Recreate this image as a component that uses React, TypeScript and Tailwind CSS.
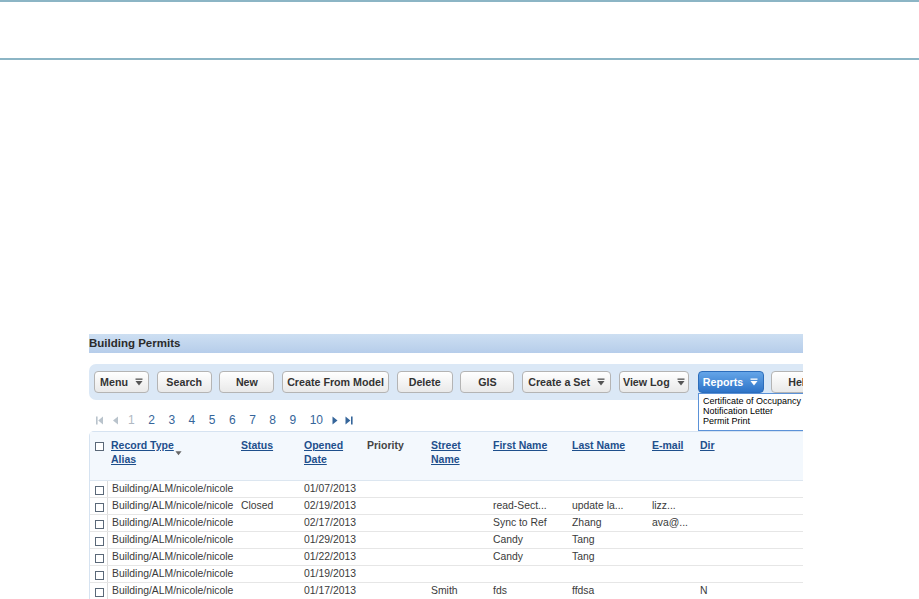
import React from 'react';

const font = { fontFamily: '"Liberation Sans", Arial, sans-serif' };

const DropIcon: React.FC<{ light?: boolean }> = ({ light }) => (
  <svg width="8" height="8" viewBox="0 0 8 8" className="ml-[7px]">
    <rect x="0.5" y="0.5" width="7" height="1.3" fill={light ? '#ffffff' : '#555555'} />
    <path d="M0.5 3 H7.5 L4 7.5 Z" fill={light ? '#ffffff' : '#555555'} />
  </svg>
);

interface Btn {
  label: string;
  width: number;
  drop?: boolean;
}

const buttons: Btn[] = [
  { label: 'Menu', width: 55, drop: true },
  { label: 'Search', width: 55 },
  { label: 'New', width: 55 },
  { label: 'Create From Model', width: 107 },
  { label: 'Delete', width: 56 },
  { label: 'GIS', width: 54 },
  { label: 'Create a Set', width: 89, drop: true },
  { label: 'View Log', width: 70, drop: true },
];

const columns = [
  { w: 130, label: ['Record Type', 'Alias'], link: true, sort: true },
  { w: 63, label: ['Status'], link: true },
  { w: 63, label: ['Opened', 'Date'], link: true },
  { w: 64, label: ['Priority'], link: false },
  { w: 62, label: ['Street', 'Name'], link: true },
  { w: 79, label: ['First Name'], link: true },
  { w: 80, label: ['Last Name'], link: true },
  { w: 48, label: ['E-mail'], link: true },
  { w: 120, label: ['Dir'], link: true },
];

const rows = [
  ['Building/ALM/nicole/nicole', '', '01/07/2013', '', '', '', '', '', ''],
  ['Building/ALM/nicole/nicole', 'Closed', '02/19/2013', '', '', 'read-Sect...', 'update la...', 'lizz...', ''],
  ['Building/ALM/nicole/nicole', '', '02/17/2013', '', '', 'Sync to Ref', 'Zhang', 'ava@...', ''],
  ['Building/ALM/nicole/nicole', '', '01/29/2013', '', '', 'Candy', 'Tang', '', ''],
  ['Building/ALM/nicole/nicole', '', '01/22/2013', '', '', 'Candy', 'Tang', '', ''],
  ['Building/ALM/nicole/nicole', '', '01/19/2013', '', '', '', '', '', ''],
  ['Building/ALM/nicole/nicole', '', '01/17/2013', '', 'Smith', 'fds', 'ffdsa', '', 'N'],
];

const Check: React.FC = () => (
  <span className="block w-[9px] h-[9px] border border-[#5a6878] bg-white" />
);

const Tri: React.FC<{ dir: 'l' | 'r'; bar?: boolean; color: string }> = ({ dir, bar, color }) => (
  <svg width="8" height="9" viewBox="0 0 8 9">
    {dir === 'l' ? (
      <>
        {bar && <rect x="0" y="0.5" width="1.6" height="8" fill={color} />}
        <path d={bar ? 'M7 0.5 V8.5 L2.2 4.5 Z' : 'M6 0.5 V8.5 L1 4.5 Z'} fill={color} />
      </>
    ) : (
      <>
        <path d={bar ? 'M0.5 0.5 V8.5 L5.4 4.5 Z' : 'M1.5 0.5 V8.5 L6.5 4.5 Z'} fill={color} />
        {bar && <rect x="6" y="0.5" width="1.6" height="8" fill={color} />}
      </>
    )}
  </svg>
);

const App: React.FC = () => {
  return (
    <div className="w-[919px] h-[599px] bg-white overflow-hidden text-[#333]" style={font}>
      <div className="h-[60px] border-t-2 border-b-2 border-[#8cb5c5]" />

      <div className="mt-[274px] ml-[89px] w-[714px] overflow-hidden relative">
        <div className="h-[19px] bg-gradient-to-b from-[#cddff2] to-[#b6cdea] flex items-center text-[11.5px] font-bold text-[#2b2b2b]">
          Building Permits
        </div>

        <div className="mt-[11px] h-[36px] bg-[#dbe8f6] rounded-l-[7px] flex items-center pl-[5px] gap-[7.7px] whitespace-nowrap">
          {buttons.map((b) => (
            <div
              key={b.label}
              style={{ width: b.width }}
              className="shrink-0 h-[22px] rounded-[4px] border border-[#b4b4b4] bg-gradient-to-b from-white to-[#e9e9e9] flex items-center justify-center text-[10.7px] font-bold text-[#333]"
            >
              {b.label}
              {b.drop && <DropIcon />}
            </div>
          ))}
          <div className="shrink-0 w-[66px] h-[22px] ml-[1px] rounded-[4px] border border-[#2c6dbb] bg-gradient-to-b from-[#64a5e8] to-[#2e74c8] flex items-center justify-center text-[10.7px] font-bold text-white">
            Reports
            <DropIcon light />
          </div>
          <div className="shrink-0 w-[60px] h-[22px] rounded-[4px] border border-[#b4b4b4] bg-gradient-to-b from-white to-[#e9e9e9] flex items-center pl-[16px] text-[10.7px] font-bold text-[#333]">
            Help
          </div>
        </div>

        <div className="absolute left-[609px] top-[59px] w-[110px] h-[38px] bg-white border border-[#5b92d8] pl-[4px] pt-[2px] text-[9px] leading-[10px] text-[#000] whitespace-nowrap">
          <div>Certificate of Occupancy</div>
          <div>Notification Letter</div>
          <div>Permit Print</div>
        </div>

        <div className="h-[31px] flex items-center pt-[9px] pl-[7px] text-[12px] text-[#35659a]">
          <Tri dir="l" bar color="#b9c3cc" />
          <span className="ml-[8px]"><Tri dir="l" color="#b9c3cc" /></span>
          <span className="ml-[8px] text-[#b0b8c2]">1</span>
          {['2', '3', '4', '5', '6', '7', '8', '9', '10'].map((n) => (
            <span key={n} className="ml-[13.5px]">{n}</span>
          ))}
          <span className="ml-[8px]"><Tri dir="r" color="#35659a" /></span>
          <span className="ml-[6px]"><Tri dir="r" bar color="#35659a" /></span>
        </div>

        <div className="border-t border-l border-[#d6e3f1] rounded-tl-[5px]">
          <div className="h-[49px] bg-[#f3f8fd] flex border-b border-[#dce6f0]">
            <div className="w-[17px] shrink-0 pl-[5px] pt-[10px]">
              <Check />
            </div>
            {columns.map((c, i) => (
              <div
                key={i}
                style={{ width: c.w }}
                className={`shrink-0 pl-[4px] pt-[6px] text-[10.5px] leading-[14px] font-bold ${c.link ? 'text-[#1e4f8c] underline' : 'text-[#444]'}`}
              >
                {c.label.map((l, j) => (
                  <div key={j} className="flex items-end">
                    {l}
                    {c.sort && j === 0 && (
                      <svg width="7" height="7" viewBox="0 0 8 8" className="ml-[1px] mb-[-5px]">
                        <path d="M0.5 1.5 H7.5 L4 6 Z" fill="#666" />
                      </svg>
                    )}
                  </div>
                ))}
              </div>
            ))}
          </div>
          {rows.map((r, ri) => (
            <div key={ri} className="h-[17px] flex border-b border-[#e6e6e6] text-[10.4px] text-[#3a3a3a]">
              <div className="w-[17px] shrink-0 pl-[5px] flex items-center pt-[2px]">
                <Check />
              </div>
              {r.map((v, ci) => (
                <div
                  key={ci}
                  style={{ width: columns[ci].w }}
                  className={`shrink-0 pl-[4px] flex items-center whitespace-nowrap ${ci === 0 ? 'border-l border-[#dcdcdc]' : ''}`}
                >
                  {v}
                </div>
              ))}
            </div>
          ))}
        </div>
      </div>
    </div>
  );
};

export default App;
